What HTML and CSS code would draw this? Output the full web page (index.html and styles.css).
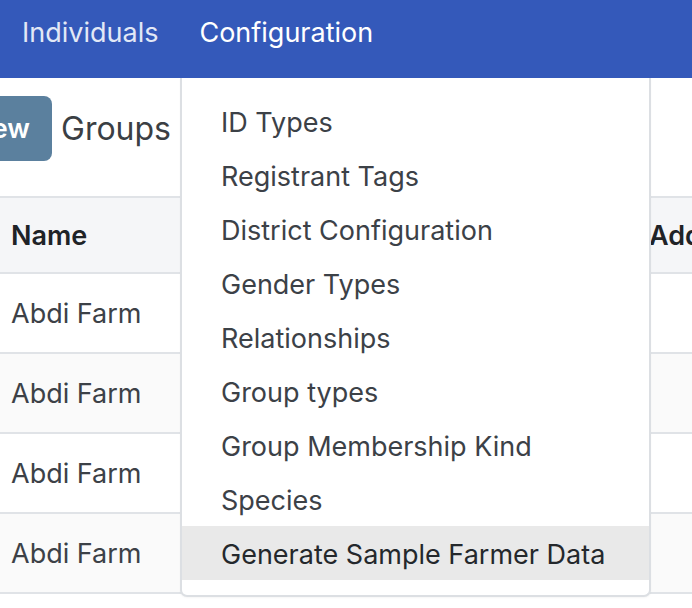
FILE: index.html
```html
<!DOCTYPE html>
<html>
<head>
<meta charset="utf-8">
<link rel="stylesheet" href="styles.css">
</head>
<body>
<nav class="navbar">
  <a class="nav-link muted">Individuals</a>
  <a class="nav-link active">Configuration</a>
</nav>
<main class="content">
  <div class="title-row">
    <button class="btn-new">New</button>
    <h1 class="title">Groups</h1>
  </div>
  <div class="table">
    <div class="thead">
      <div class="cell">Name</div>
      <div class="cell">Address</div>
    </div>
    <div class="row"><div class="cell">Abdi Farm</div><div class="cell"></div></div>
    <div class="row striped"><div class="cell">Abdi Farm</div><div class="cell"></div></div>
    <div class="row"><div class="cell">Abdi Farm</div><div class="cell"></div></div>
    <div class="row striped"><div class="cell">Abdi Farm</div><div class="cell"></div></div>
  </div>
</main>
<div class="dropdown">
  <div class="item">ID Types</div>
  <div class="item">Registrant Tags</div>
  <div class="item">District Configuration</div>
  <div class="item">Gender Types</div>
  <div class="item">Relationships</div>
  <div class="item">Group types</div>
  <div class="item">Group Membership Kind</div>
  <div class="item">Species</div>
  <div class="item hover">Generate Sample Farmer Data</div>
</div>
</body>
</html>
```
FILE: styles.css
```css
* { box-sizing: border-box; }
html, body { margin: 0; padding: 0; }
body {
  width: 692px;
  height: 608px;
  overflow: hidden;
  position: relative;
  font-family: Inter, "Liberation Sans", sans-serif;
  background: #fff;
  color: #3c4147;
}
.navbar {
  height: 78px;
  background: #3459ba;
  display: flex;
  align-items: flex-start;
  padding-left: 22px;
  gap: 41px;
}
.nav-link {
  font-size: 27px;
  line-height: 66px;
  height: 66px;
}
.nav-link.muted { color: #e2e8f6; }
.nav-link.active { color: #ffffff; }
.content { padding-top: 18px; }
.title-row {
  display: flex;
  align-items: center;
  height: 65px;
}
.btn-new {
  width: 92px;
  height: 65px;
  margin-left: -40px;
  border: none;
  border-radius: 8px;
  background: #5b809e;
  color: #fff;
  font-family: inherit;
  font-size: 27px;
  font-weight: 600;
  display: flex;
  align-items: center;
  justify-content: flex-end;
  padding: 0 22px 0 0;
}
.title {
  margin: 0 0 0 9px;
  font-size: 32px;
  font-weight: 400;
  color: #3b3f44;
}
.table {
  margin-top: 35px;
  width: 1000px;
}
.thead, .row {
  display: grid;
  grid-template-columns: 638px 362px;
  align-items: center;
}
.thead {
  height: 78px;
  background: #f5f6f8;
  border-top: 2px solid #e0e3e7;
  border-bottom: 2px solid #e0e3e7;
  font-weight: 600;
  color: #1f2327;
}
.row {
  height: 80px;
  border-bottom: 2px solid #e0e3e7;
}
.row.striped { background: #fafafa; }
.cell {
  padding-left: 11px;
  font-size: 27px;
  white-space: nowrap;
}
.dropdown {
  position: absolute;
  top: 78px;
  left: 180px;
  width: 471px;
  background: #fff;
  border: 2px solid #dcdfe3;
  border-top: none;
  border-radius: 0 0 7px 7px;
  padding: 16px 0 15px 0;
  box-shadow: 0 1px 2px rgba(0,0,0,0.04);
  z-index: 10;
}
.item {
  height: 54px;
  line-height: 50px;
  padding-top: 4px;
  padding-left: 39px;
  font-size: 27px;
  color: #3c4147;
  white-space: nowrap;
}
.item.hover {
  background: #e9e9e9;
  color: #24282c;
}
```
